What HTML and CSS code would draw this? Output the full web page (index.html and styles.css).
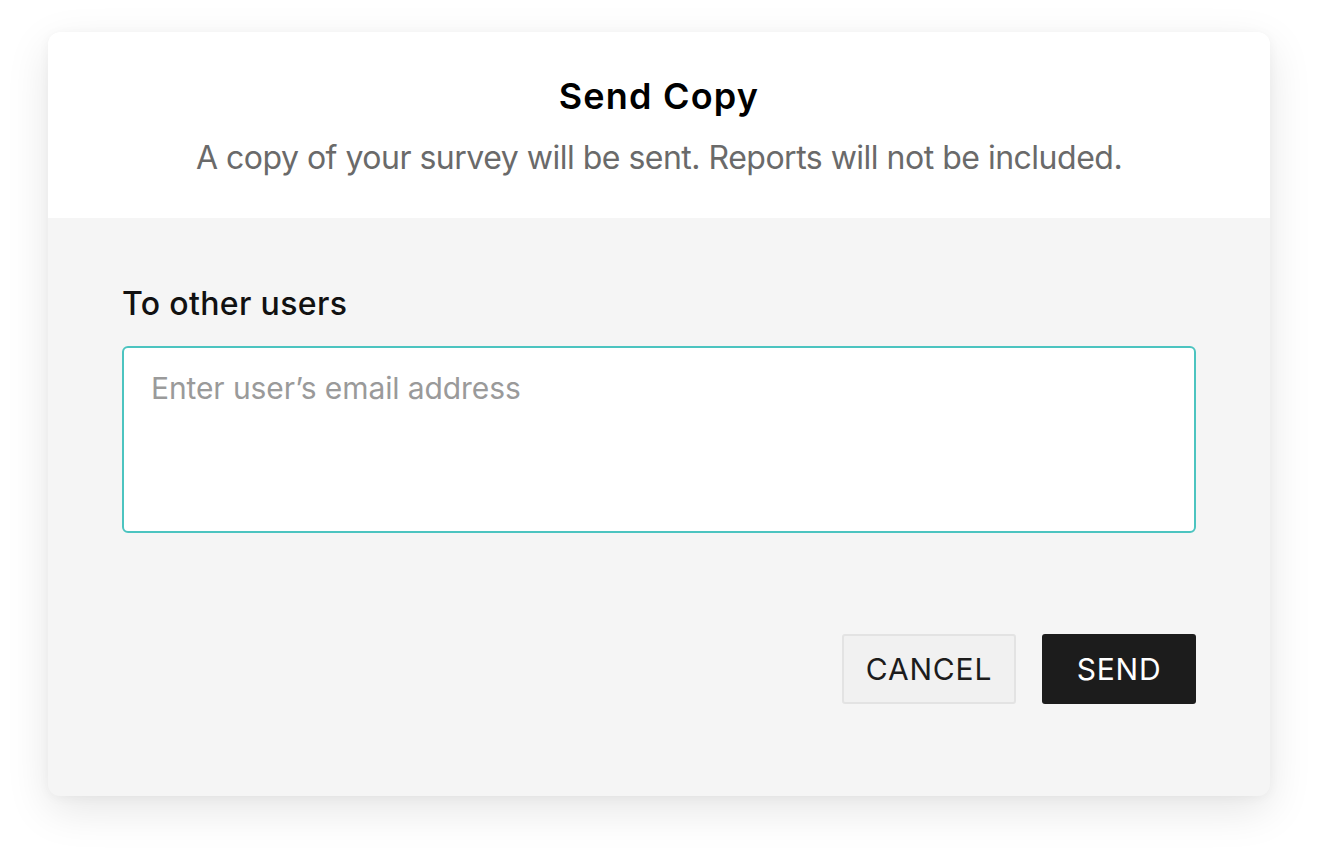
FILE: index.html
```html
<!DOCTYPE html>
<html lang="en">
<head>
<meta charset="utf-8">
<title>Send Copy</title>
<link rel="stylesheet" href="styles.css">
</head>
<body>
<div class="modal">
  <header class="modal-head">
    <h1 class="title">Send Copy</h1>
    <p class="subtitle">A copy of your survey will be sent. Reports will not be included.</p>
  </header>
  <section class="modal-body">
    <label class="field-label" for="emails">To other users</label>
    <textarea id="emails" class="email-input" placeholder="Enter user’s email address"></textarea>
    <div class="actions">
      <button class="btn btn-cancel" type="button">CANCEL</button>
      <button class="btn btn-send" type="button">SEND</button>
    </div>
  </section>
</div>
</body>
</html>
```
FILE: styles.css
```css
* { box-sizing: border-box; }
html { height: 100%; background: #ffffff; }
body {
  margin: 0;
  min-height: 100%;
  font-family: Inter, "Noto Sans", "Liberation Sans", sans-serif;
  padding: 32px 48px 0 48px;
}
.modal {
  width: 1222px;
  height: 764px;
  border-radius: 12px;
  overflow: hidden;
  background: #f5f5f5;
  box-shadow: 0 14px 44px rgba(0,0,0,0.10), 0 2px 12px rgba(0,0,0,0.04);
  display: flex;
  flex-direction: column;
}
.modal-head {
  background: #ffffff;
  height: 186px;
  text-align: center;
  padding-top: 40px;
}
.title {
  margin: 0;
  font-size: 36px;
  line-height: 48px;
  font-weight: 600;
  color: #000;
  letter-spacing: 1.2px;
}
.subtitle {
  margin: 18px 0 0;
  font-size: 32px;
  line-height: 40px;
  color: #6a6a6a;
  font-weight: 400;
  letter-spacing: -0.5px;
}
.modal-body {
  flex: 1;
  padding: 66px 74px 0 74px;
  display: flex;
  flex-direction: column;
}
.field-label {
  font-size: 32px;
  line-height: 40px;
  color: #111;
  font-weight: 500;
  letter-spacing: 0.35px;
}
.email-input {
  margin-top: 22px;
  width: 1074px;
  height: 187px;
  border: 2px solid #4cc4c0;
  border-radius: 6px;
  background: #fff;
  resize: none;
  outline: none;
  padding: 22px 27px;
  font-family: inherit;
  font-size: 30px;
  line-height: 36px;
  color: #333;
  letter-spacing: -0.1px;
}
.email-input::placeholder { color: #9a9a9a; }
.actions {
  margin-top: 101px;
  display: flex;
  justify-content: flex-end;
  gap: 26px;
}
.btn {
  height: 70px;
  font-family: inherit;
  font-size: 30px;
  border-radius: 3px;
  cursor: pointer;
  letter-spacing: 0.8px;
  padding: 0;
}
.btn-cancel {
  width: 174px;
  background: #f1f1f1;
  border: 2px solid #e3e3e3;
  color: #1c1c1c;
}
.btn-send {
  width: 154px;
  background: #1c1c1c;
  border: none;
  color: #fff;
}
```
